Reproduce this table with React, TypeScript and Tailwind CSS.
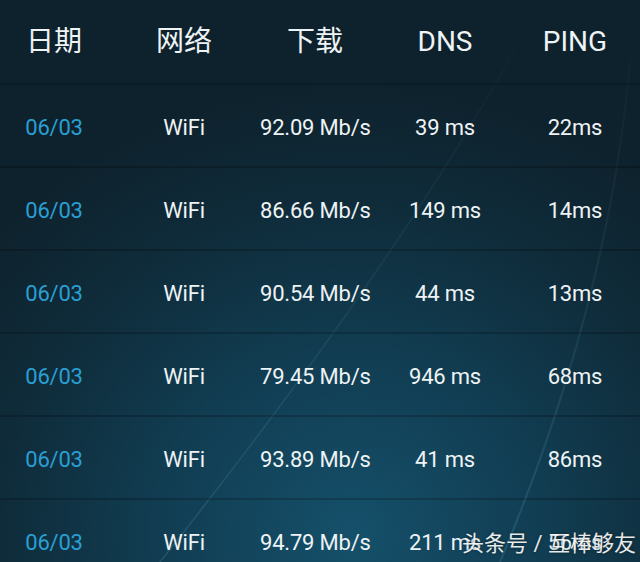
import React from 'react'

const rows = [
    { date: '06/03', net: 'WiFi', down: '92.09 Mb/s', dns: '39 ms', ping: '22ms' },
    { date: '06/03', net: 'WiFi', down: '86.66 Mb/s', dns: '149 ms', ping: '14ms' },
    { date: '06/03', net: 'WiFi', down: '90.54 Mb/s', dns: '44 ms', ping: '13ms' },
    { date: '06/03', net: 'WiFi', down: '79.45 Mb/s', dns: '946 ms', ping: '68ms' },
    { date: '06/03', net: 'WiFi', down: '93.89 Mb/s', dns: '41 ms', ping: '86ms' },
    { date: '06/03', net: 'WiFi', down: '94.79 Mb/s', dns: '211 ms', ping: '56ms' },
]

const cols = 'grid grid-cols-[108px_152px_110px_150px_110px] items-center text-center whitespace-nowrap'

export default function App() {
    return (
        <div
            className="relative w-[640px] h-[562px] overflow-hidden bg-[radial-gradient(ellipse_75%_80%_at_55%_95%,#15506a_0%,#113d52_40%,#0f2b39_75%,#0e222d_100%)] text-[#eef3f5]"
            style={{ fontFamily: 'Roboto, "Noto Sans CJK SC", sans-serif' }}
        >
            {/* light streaks in the wallpaper */}
            <svg className="absolute inset-0 pointer-events-none" width="640" height="562" viewBox="0 0 640 562">
                <defs>
                    <linearGradient id="fade" x1="0" y1="0" x2="0" y2="562" gradientUnits="userSpaceOnUse">
                        <stop offset="0" stopColor="#7cc4e2" stopOpacity="0" />
                        <stop offset="0.35" stopColor="#7cc4e2" stopOpacity="0.06" />
                        <stop offset="1" stopColor="#7cc4e2" stopOpacity="0.16" />
                    </linearGradient>
                </defs>
                <path d="M520 40 Q400 260 160 562" stroke="url(#fade)" strokeWidth="1.5" fill="none" />
                <path d="M630 60 Q610 300 500 562" stroke="url(#fade)" strokeWidth="2" fill="none" />
            </svg>

            <div className="relative">
                <div className={`${cols} h-[85px] text-[28px] border-b-2 border-black/20`}>
                    <div>日期</div>
                    <div>网络</div>
                    <div>下载</div>
                    <div>DNS</div>
                    <div>PING</div>
                </div>
                {rows.map((r, i) => (
                    <div key={i} className={`${cols} h-[83px] pt-[3px] text-[22px] tracking-[-0.2px] border-b-2 border-black/20`}>
                        <div className="text-[#2a9fd3]">{r.date}</div>
                        <div>{r.net}</div>
                        <div>{r.down}</div>
                        <div>{r.dns}</div>
                        <div>{r.ping}</div>
                    </div>
                ))}
            </div>

            {/* watermark */}
            <div className="absolute left-[462px] top-[528px] text-[22px] leading-[32px] text-white/90 [text-shadow:0_0_3px_rgba(0,0,0,0.5)] whitespace-nowrap">
                头条号 / 互棒够友
            </div>
        </div>
    )
}
